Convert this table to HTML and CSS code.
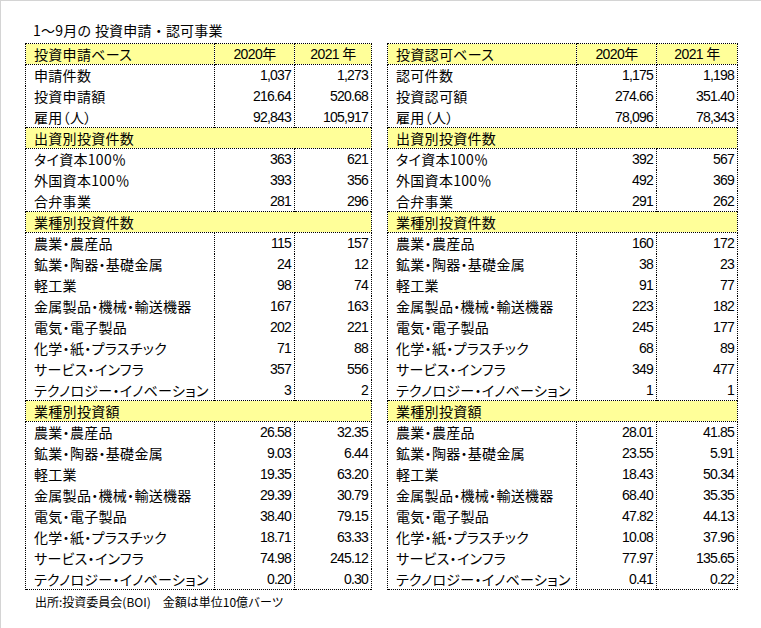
FILE: index.html
```html
<!DOCTYPE html>
<html lang="ja">
<head>
<meta charset="utf-8">
<title>1～9月の投資申請・認可事業</title>
<link rel="stylesheet" href="styles.css">
</head>
<body>
<div class="frame">
  <div class="title">1～9月の 投資申請・認可事業</div>
  <div class="tables">
    <table class="tbl left">
      <colgroup><col class="c1"><col class="c2"><col class="c3"></colgroup>
      <tr class="head"><td class="lbl">投資申請ベース</td><td class="yr">2020年</td><td class="yr">2021 年</td></tr>
      <tr><td class="lbl">申請件数</td><td class="num">1,037</td><td class="num">1,273</td></tr>
      <tr><td class="lbl">投資申請額</td><td class="num">216.64</td><td class="num">520.68</td></tr>
      <tr><td class="lbl">雇用（人）</td><td class="num">92,843</td><td class="num">105,917</td></tr>
      <tr class="sec"><td colspan="3" class="lbl">出資別投資件数</td></tr>
      <tr><td class="lbl">タイ資本100％</td><td class="num">363</td><td class="num">621</td></tr>
      <tr><td class="lbl">外国資本100％</td><td class="num">393</td><td class="num">356</td></tr>
      <tr><td class="lbl">合弁事業</td><td class="num">281</td><td class="num">296</td></tr>
      <tr class="sec"><td colspan="3" class="lbl">業種別投資件数</td></tr>
      <tr><td class="lbl">農業・農産品</td><td class="num">115</td><td class="num">157</td></tr>
      <tr><td class="lbl">鉱業・陶器・基礎金属</td><td class="num">24</td><td class="num">12</td></tr>
      <tr><td class="lbl">軽工業</td><td class="num">98</td><td class="num">74</td></tr>
      <tr><td class="lbl">金属製品・機械・輸送機器</td><td class="num">167</td><td class="num">163</td></tr>
      <tr><td class="lbl">電気・電子製品</td><td class="num">202</td><td class="num">221</td></tr>
      <tr><td class="lbl">化学・紙・プラスチック</td><td class="num">71</td><td class="num">88</td></tr>
      <tr><td class="lbl">サービス・インフラ</td><td class="num">357</td><td class="num">556</td></tr>
      <tr><td class="lbl">テクノロジー・イノベーション</td><td class="num">3</td><td class="num">2</td></tr>
      <tr class="sec"><td colspan="3" class="lbl">業種別投資額</td></tr>
      <tr><td class="lbl">農業・農産品</td><td class="num">26.58</td><td class="num">32.35</td></tr>
      <tr><td class="lbl">鉱業・陶器・基礎金属</td><td class="num">9.03</td><td class="num">6.44</td></tr>
      <tr><td class="lbl">軽工業</td><td class="num">19.35</td><td class="num">63.20</td></tr>
      <tr><td class="lbl">金属製品・機械・輸送機器</td><td class="num">29.39</td><td class="num">30.79</td></tr>
      <tr><td class="lbl">電気・電子製品</td><td class="num">38.40</td><td class="num">79.15</td></tr>
      <tr><td class="lbl">化学・紙・プラスチック</td><td class="num">18.71</td><td class="num">63.33</td></tr>
      <tr><td class="lbl">サービス・インフラ</td><td class="num">74.98</td><td class="num">245.12</td></tr>
      <tr><td class="lbl">テクノロジー・イノベーション</td><td class="num">0.20</td><td class="num">0.30</td></tr>
    </table>
    <table class="tbl right">
      <colgroup><col class="c1"><col class="c2"><col class="c3"></colgroup>
      <tr class="head"><td class="lbl">投資認可ベース</td><td class="yr">2020年</td><td class="yr">2021 年</td></tr>
      <tr><td class="lbl">認可件数</td><td class="num">1,175</td><td class="num">1,198</td></tr>
      <tr><td class="lbl">投資認可額</td><td class="num">274.66</td><td class="num">351.40</td></tr>
      <tr><td class="lbl">雇用（人）</td><td class="num">78,096</td><td class="num">78,343</td></tr>
      <tr class="sec"><td colspan="3" class="lbl">出資別投資件数</td></tr>
      <tr><td class="lbl">タイ資本100％</td><td class="num">392</td><td class="num">567</td></tr>
      <tr><td class="lbl">外国資本100％</td><td class="num">492</td><td class="num">369</td></tr>
      <tr><td class="lbl">合弁事業</td><td class="num">291</td><td class="num">262</td></tr>
      <tr class="sec"><td colspan="3" class="lbl">業種別投資件数</td></tr>
      <tr><td class="lbl">農業・農産品</td><td class="num">160</td><td class="num">172</td></tr>
      <tr><td class="lbl">鉱業・陶器・基礎金属</td><td class="num">38</td><td class="num">23</td></tr>
      <tr><td class="lbl">軽工業</td><td class="num">91</td><td class="num">77</td></tr>
      <tr><td class="lbl">金属製品・機械・輸送機器</td><td class="num">223</td><td class="num">182</td></tr>
      <tr><td class="lbl">電気・電子製品</td><td class="num">245</td><td class="num">177</td></tr>
      <tr><td class="lbl">化学・紙・プラスチック</td><td class="num">68</td><td class="num">89</td></tr>
      <tr><td class="lbl">サービス・インフラ</td><td class="num">349</td><td class="num">477</td></tr>
      <tr><td class="lbl">テクノロジー・イノベーション</td><td class="num">1</td><td class="num">1</td></tr>
      <tr class="sec"><td colspan="3" class="lbl">業種別投資額</td></tr>
      <tr><td class="lbl">農業・農産品</td><td class="num">28.01</td><td class="num">41.85</td></tr>
      <tr><td class="lbl">鉱業・陶器・基礎金属</td><td class="num">23.55</td><td class="num">5.91</td></tr>
      <tr><td class="lbl">軽工業</td><td class="num">18.43</td><td class="num">50.34</td></tr>
      <tr><td class="lbl">金属製品・機械・輸送機器</td><td class="num">68.40</td><td class="num">35.35</td></tr>
      <tr><td class="lbl">電気・電子製品</td><td class="num">47.82</td><td class="num">44.13</td></tr>
      <tr><td class="lbl">化学・紙・プラスチック</td><td class="num">10.08</td><td class="num">37.96</td></tr>
      <tr><td class="lbl">サービス・インフラ</td><td class="num">77.97</td><td class="num">135.65</td></tr>
      <tr><td class="lbl">テクノロジー・イノベーション</td><td class="num">0.41</td><td class="num">0.22</td></tr>
    </table>
  </div>
  <div class="note">出所:投資委員会(BOI)　金額は単位10億バーツ</div>
</div>
</body>
</html>
```
FILE: styles.css
```css
html, body {
  margin: 0;
  padding: 0;
  background: #ffffff;
}
.frame {
  box-sizing: border-box;
  width: 761px;
  height: 628px;
  border-top: 1px solid #d4d4d4;
  border-left: 1px solid #d4d4d4;
  padding: 19px 0 0 0;
  font-family: "Noto Sans CJK JP", sans-serif;
  color: #000;
}
.title {
  font-size: 14px;
  line-height: 20px;
  height: 20px;
  padding-left: 32px;
  margin-bottom: 3px;
  letter-spacing: 0.2px;
}
.tables {
  display: flex;
  gap: 15px;
  padding-left: 24px;
}
.tbl {
  border-collapse: collapse;
  table-layout: fixed;
  border: 1px dotted #000;
  font-size: 14px;
}
.tbl.left { width: 346px; }
.tbl.right { width: 350px; }
.tbl.left .c1 { width: 189px; }
.tbl.left .c2 { width: 80px; }
.tbl.left .c3 { width: 77px; }
.tbl.right .c1 { width: 189px; }
.tbl.right .c2 { width: 80px; }
.tbl.right .c3 { width: 81px; }
.tbl tr { height: 21px; }
.tbl td {
  padding: 0;
  height: 20px;
  line-height: 20px;
  white-space: nowrap;
  overflow: hidden;
  border-left: 1px dotted #000;
  border-right: 1px dotted #000;
}
.tbl .lbl {
  padding-left: 8px;
  font-feature-settings: "palt";
  letter-spacing: 0.3px;
}
.tbl .num {
  text-align: right;
  padding-right: 3px;
  font-family: "Liberation Sans", "Noto Sans CJK JP", sans-serif;
  letter-spacing: -0.8px;
}
.tbl .yr {
  text-align: center;
  font-family: "Liberation Sans", "Noto Sans CJK JP", sans-serif;
  letter-spacing: -0.6px;
}
.tbl .head td,
.tbl .sec td {
  background: #ffff99;
  border-top: 1px dotted #000;
  border-bottom: 1px dotted #000;
}
.note {
  font-size: 12px;
  line-height: 16px;
  padding-left: 34px;
  margin-top: 4px;
}
```
